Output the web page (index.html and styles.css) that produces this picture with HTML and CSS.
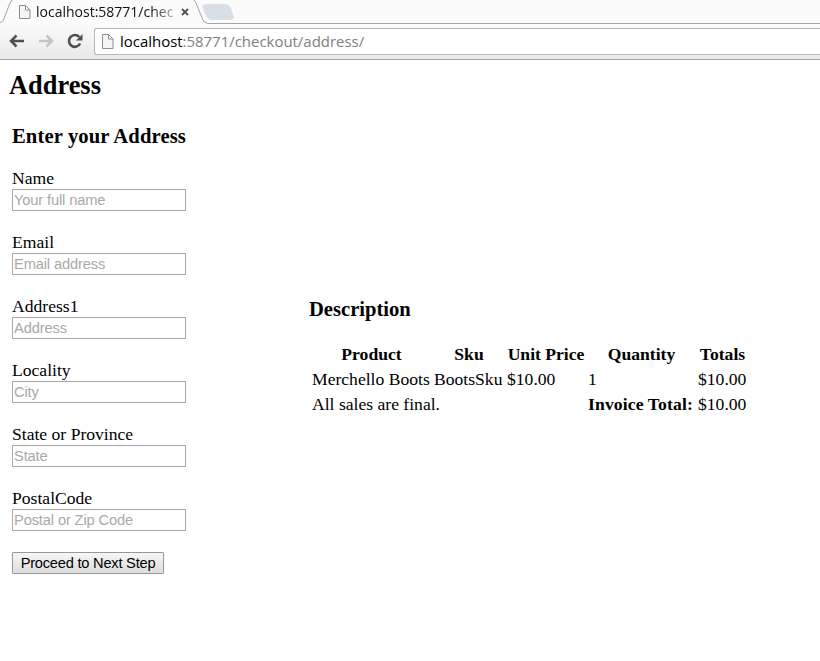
FILE: index.html
```html
<!DOCTYPE html>
<html lang="en">
<head>
<meta charset="utf-8">
<title>Address</title>
<link rel="stylesheet" href="styles.css">
</head>
<body>
<header class="browser">
  <svg class="tabs" width="820" height="24" viewBox="0 0 820 24">
    <path d="M0 23.5C4 22 4 20 5 17L10 4Q11 0 14-.5H192Q195 0 196 3L202 18Q204 23.5 208 23.5H820V24H0Z" fill="#fbfbfb"/>
    <path d="M0 22.5C3 22 4 19 5 16L10 3Q11 0 14-1M192-1Q195 0 196 3L202 18Q204 23.5 208 23.5H820" fill="none" stroke="#a5a5a5"/>
    <path d="M206 4.500H225Q229 4.500 230.500 8L233 15Q234.500 19.500 231 19.500H212Q208 19.500 206.500 16L203 8Q201.500 4.500 206 4.500Z" fill="#d7dee6" stroke="#dfe2e5"/>
  </svg>
  <div class="tab">
    <svg class="page-icon" width="12" height="14" viewBox="0 0 12 14"><path d="M.5.5H6.500L11 5V13.500H.5ZM6.500.5V5H11" fill="#f5f5f5" stroke="#8d8d8d"/></svg>
    <span class="tab-title">localhost:58771/chec</span>
    <svg class="close" width="8" height="8" viewBox="0 0 8 8"><path d="M1 1 7 7M7 1 1 7" stroke="#505050" stroke-width="1.800"/></svg>
  </div>
  <div class="toolbar">
    <svg width="16" height="14" viewBox="0 0 16 14"><path d="M15 7H2M7.500 1.500 2 7 7.500 12.500" fill="none" stroke="#505050" stroke-width="2.500"/></svg>
    <svg width="16" height="14" viewBox="0 0 16 14"><path d="M1 7H14M8.500 1.500 14 7 8.500 12.500" fill="none" stroke="#c3c3c3" stroke-width="2.500"/></svg>
    <svg width="16" height="16" viewBox="0 0 16 16"><path d="M12.300 4A5.900 5.900 0 1 0 13.200 10.500" fill="none" stroke="#505050" stroke-width="2.600"/><path d="M15.500 1V7.500H9Z" fill="#505050"/></svg>
    <div class="omnibox">
      <svg class="page-icon" width="12" height="15" viewBox="0 0 12 15"><path d="M.5.5H6.500L11 5V14.500H.5ZM6.500.5V5H11" fill="#f5f5f5" stroke="#8d8d8d"/></svg>
      <span class="url"><span class="host">localhost</span>:58771/checkout/address/</span>
    </div>
  </div>
</header>
<main>
  <h2>Address</h2>
  <div class="columns">
    <form class="address">
      <h3>Enter your Address</h3>
      <label>Name<input type="text" placeholder="Your full name"></label>
      <label>Email<input type="text" placeholder="Email address"></label>
      <label>Address1<input type="text" placeholder="Address"></label>
      <label>Locality<input type="text" placeholder="City"></label>
      <label>State or Province<input type="text" placeholder="State"></label>
      <label>PostalCode<input type="text" placeholder="Postal or Zip Code"></label>
      <button type="button">Proceed to Next Step</button>
    </form>
    <section class="invoice">
      <h3>Description</h3>
      <table>
        <colgroup><col class="c-product"><col class="c-sku"><col class="c-price"><col class="c-quantity"><col class="c-total"></colgroup>
        <tr><th>Product</th><th>Sku</th><th>Unit Price</th><th>Quantity</th><th>Totals</th></tr>
        <tr><td>Merchello Boots</td><td>BootsSku</td><td>$10.00</td><td>1</td><td>$10.00</td></tr>
        <tr><td colspan="3">All sales are final.</td><td><b>Invoice Total:</b></td><td>$10.00</td></tr>
      </table>
    </section>
  </div>
</main>
</body>
</html>
```
FILE: styles.css
```css
* { box-sizing: border-box; }
body {
  margin: 0;
  background: #fff;
  color: #000;
  font: 17.6px/20px "Liberation Serif", serif;
  overflow: hidden;
}
.browser {
  position: relative;
  height: 60px;
  background: linear-gradient(#fbfbfb 24px, #e9e9e9 59px);
  border-bottom: 1px solid #a9a9a9;
  font-family: "Open Sans", "Noto Sans", sans-serif;
}
.tabs { position: absolute; left: 0; top: 0; }
.tab {
  position: relative;
  display: flex;
  align-items: center;
  height: 24px;
  padding-left: 19px;
}
.page-icon { flex: none; }
.tab-title {
  width: 139px;
  margin-left: 5px;
  overflow: hidden;
  white-space: nowrap;
  font-size: 14px;
  color: transparent;
  background: linear-gradient(90deg, #111 115px, #bbb 139px);
  background-clip: text;
}
.close { margin-left: 6px; }
.toolbar {
  display: flex;
  align-items: center;
  height: 35px;
  padding-left: 9px;
  gap: 13px;
}
.toolbar > svg { margin-top: -1px; }
.omnibox {
  flex: 1;
  display: flex;
  align-items: center;
  height: 27px;
  margin-left: -2px;
  padding-left: 7px;
  background: #fff;
  border: 1px solid #b8b8b8;
  border-right: 0;
  border-radius: 3px 0 0 3px;
}
.url { margin: -2px 0 0 6px; font-size: 14.95px; color: #808080; white-space: nowrap; }
.host { color: #000; }
main { padding: 10px 9px 0; }
h2 { margin: 0; font-size: 26.4px; line-height: 30px; }
h3 { margin: 0; font-size: 20.6px; line-height: 24px; }
.columns { display: flex; align-items: flex-start; margin-top: 24px; }
.address { width: 300px; padding-left: 3px; }
.address h3 { margin-bottom: 20px; letter-spacing: .13px; }
label { display: block; height: 64px; }
input {
  display: block;
  width: 174px;
  height: 22px;
  margin-top: 1px;
  padding: 0 1px;
  border: 1px solid #a9a9a9;
  font: 14.67px "Liberation Sans", sans-serif;
  letter-spacing: -.13px;
}
input::placeholder { color: #a9a9a9; opacity: 1; }
button {
  display: block;
  width: 152px;
  height: 22px;
  padding: 0 0 1px;
  border: 1px solid #999;
  border-radius: 1px;
  background: linear-gradient(#f6f6f6, #ddd);
  color: #000;
  font: 14.67px "Liberation Sans", sans-serif;
  letter-spacing: -.23px;
}
.invoice { padding-top: 173px; }
.invoice h3 { margin: 0 0 20px; }
table { width: 438px; border-collapse: collapse; table-layout: fixed; }
th, td { height: 25px; padding: 0 0 0 3px; text-align: left; white-space: nowrap; }
th { text-align: center; }
b { letter-spacing: .13px; }
.c-product { width: 122px; }
.c-sku { width: 73px; }
.c-price { width: 81px; }
.c-quantity { width: 110px; }
.c-total { width: 52px; }
```
